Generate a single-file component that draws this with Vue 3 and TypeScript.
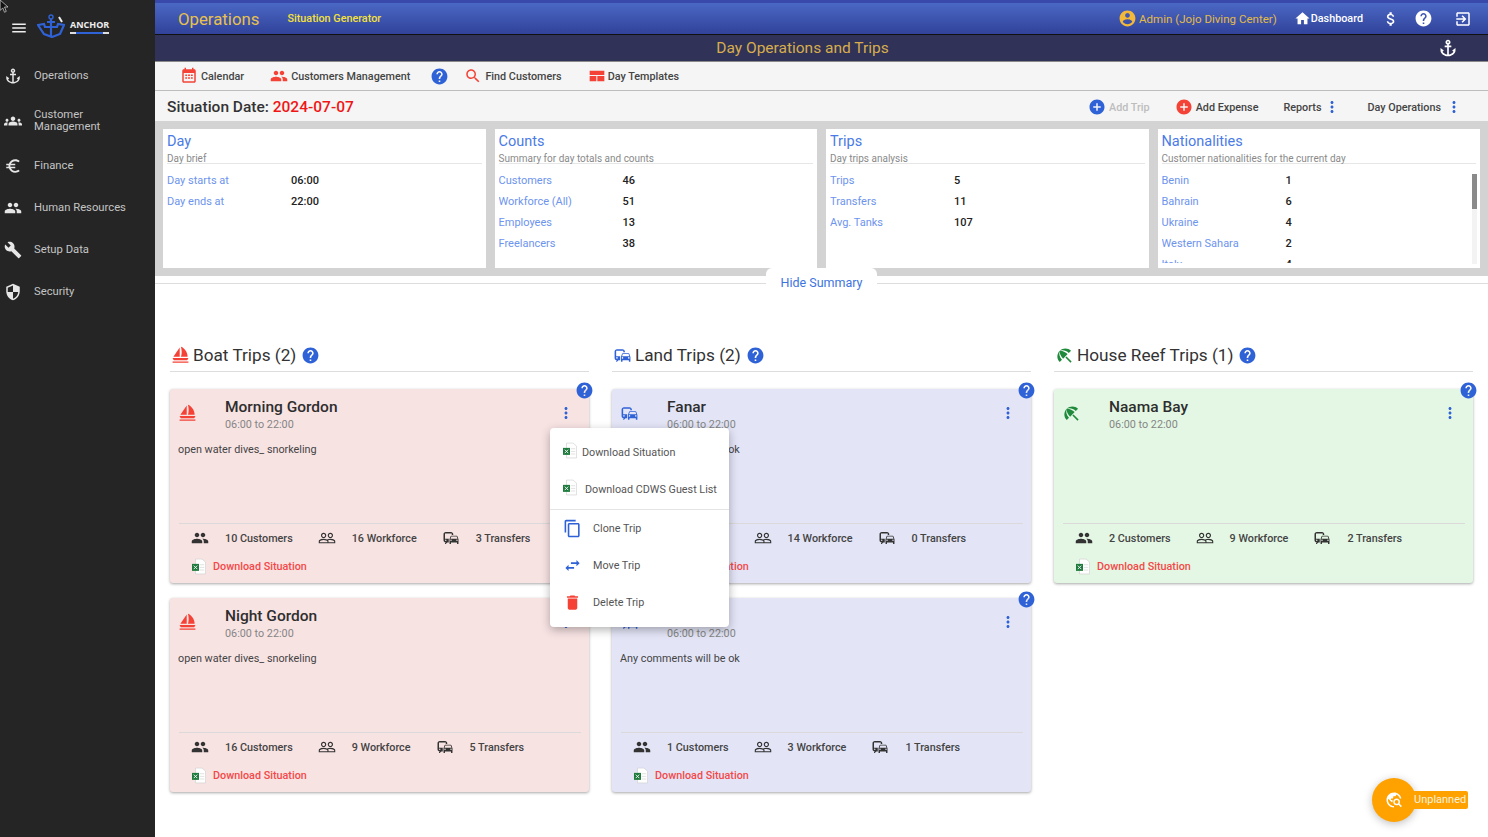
<script setup lang="ts">
// Day operations board: left menu, header bars, summary cards and trip columns
const ic = {
  anchor: 'M17,15l1.55,1.55c-0.96,1.69-3.33,3.04-5.55,3.37V11h3V9h-3V7.82C14.16,7.4,15,6.3,15,5c0-1.65-1.35-3-3-3S9,3.35,9,5c0,1.3,0.84,2.4,2,2.82V9H8v2h3v8.92c-2.22-0.33-4.59-1.68-5.55-3.37L7,15l-4-3v3c0,3.88,4.92,7,9,7s9-3.12,9-7v-3L17,15z M12,4c0.55,0,1,0.45,1,1s-0.45,1-1,1s-1-0.45-1-1S11.45,4,12,4z',
  groups: 'M12 12.75c1.63 0 3.07.39 4.24.9 1.08.48 1.76 1.56 1.76 2.73V18H6v-1.61c0-1.18.68-2.26 1.76-2.73 1.17-.52 2.61-.91 4.24-.91zM4 13c1.1 0 2-.9 2-2s-.9-2-2-2-2 .9-2 2 .9 2 2 2zm1.13 1.1c-.37-.06-.74-.1-1.13-.1-.99 0-1.93.21-2.78.58C.48 14.9 0 15.62 0 16.43V18h4.5v-1.61c0-.83.23-1.61.63-2.29zM20 13c1.1 0 2-.9 2-2s-.9-2-2-2-2 .9-2 2 .9 2 2 2zm4 3.43c0-.81-.48-1.53-1.22-1.85-.85-.37-1.79-.58-2.78-.58-.39 0-.76.04-1.13.1.4.68.63 1.46.63 2.29V18H24v-1.57zM12 6c1.66 0 3 1.34 3 3s-1.34 3-3 3-3-1.34-3-3 1.34-3 3-3z',
  euro: 'M15 18.5c-2.51 0-4.68-1.42-5.76-3.5H15v-2H8.58c-.05-.33-.08-.66-.08-1s.03-.67.08-1H15V9H9.24C10.32 6.92 12.5 5.5 15 5.5c1.61 0 3.09.59 4.23 1.57L21 5.3C19.41 3.87 17.3 3 15 3c-3.92 0-7.24 2.51-8.48 6H3v2h3.06c-.04.33-.06.66-.06 1 0 .34.02.67.06 1H3v2h3.52c1.24 3.49 4.56 6 8.48 6 2.31 0 4.41-.87 6-2.3l-1.78-1.77c-1.13.98-2.6 1.57-4.22 1.57z',
  people: 'M16 11c1.66 0 2.99-1.34 2.99-3S17.66 5 16 5c-1.66 0-3 1.34-3 3s1.34 3 3 3zm-8 0c1.66 0 2.99-1.34 2.99-3S9.66 5 8 5C6.34 5 5 6.34 5 8s1.34 3 3 3zm0 2c-2.33 0-7 1.17-7 3.5V19h14v-2.5c0-2.33-4.67-3.5-7-3.5zm8 0c-.29 0-.62.02-.97.05 1.16.84 1.97 1.97 1.97 3.45V19h6v-2.5c0-2.33-4.67-3.5-7-3.5z',
  peopleOutline: 'M16.5 13c-1.2 0-3.07.34-4.5 1-1.43-.67-3.3-1-4.5-1C5.33 13 1 14.08 1 16.25V19h22v-2.75c0-2.17-4.33-3.25-6.5-3.25zm-4 4.5h-10v-1.25c0-.54 2.56-1.75 5-1.75s5 1.21 5 1.75v1.25zm9 0H14v-1.25c0-.46-.2-.86-.52-1.22.88-.3 1.96-.53 3.02-.53 2.44 0 5 1.21 5 1.75v1.25zM7.5 12c1.93 0 3.5-1.57 3.5-3.5S9.43 5 7.5 5 4 6.57 4 8.5 5.57 12 7.5 12zm0-5.5c1.1 0 2 .9 2 2s-.9 2-2 2-2-.9-2-2 .9-2 2-2zm9 5.5c1.93 0 3.5-1.57 3.5-3.5S18.43 5 16.5 5 13 6.57 13 8.5s1.57 3.5 3.5 3.5zm0-5.5c1.1 0 2 .9 2 2s-.9 2-2 2-2-.9-2-2 .9-2 2-2z',
  commute: 'M12 4H5C3.34 4 2 5.34 2 7v8c0 1.66 1.34 3 3 3l-1 1v1h1l2-2.03L9 18v-5H4V5.98L13 6v2h2V7c0-1.66-1.34-3-3-3zM5 14c.55 0 1 .45 1 1s-.45 1-1 1-1-.45-1-1 .45-1 1-1zm15.57-4.34c-.14-.4-.52-.66-.97-.66h-7.19c-.46 0-.83.26-.98.66L10 13.77l.01 5.51c0 .38.31.72.69.72h.62c.38 0 .68-.38.68-.76V18h8v1.24c0 .38.31.76.69.76h.61c.38 0 .69-.34.69-.72l.01-1.37v-4.14l-1.43-4.11zm-8.16.34h7.19l1.03 3h-9.25l1.03-3zM12 16c-.55 0-1-.45-1-1s.45-1 1-1 1 .45 1 1-.45 1-1 1zm8 0c-.55 0-1-.45-1-1s.45-1 1-1 1 .45 1 1-.45 1-1 1z',
  sailing: 'M11 13.5V2L3 13.5h8zm10 0C21 7 15.5 1.5 12.5 1c0 0 1 3 1 6.5s-1 6-1 6H21zM22 15H2c.3 1.200.9 2.200 1.700 3h16.600c.8-.8 1.400-1.800 1.700-3zM2 19.500h20V21H2z',
  umbrella: 'M13.127 14.56l1.43-1.43 6.44 6.443L19.57 21zm4.293-5.73l2.86-2.86c-3.95-3.95-10.35-3.96-14.3-.02 3.93-1.3 8.31-.25 11.44 2.88zM5.95 5.98c-3.94 3.95-3.93 10.35.02 14.3l2.86-2.86C5.7 14.29 4.65 9.91 5.95 5.98zm.02-.02l-.01.01c-.38 3.01 1.17 6.88 4.3 10.02l5.73-5.73c-3.13-3.13-7.01-4.68-10.02-4.3z',
  help: 'M12 2C6.48 2 2 6.48 2 12s4.48 10 10 10 10-4.48 10-10S17.52 2 12 2zm1 17h-2v-2h2v2zm2.07-7.75l-.9.92C13.45 12.9 13 13.5 13 15h-2v-.5c0-1.1.45-2.1 1.17-2.83l1.24-1.26c.37-.36.59-.86.59-1.41 0-1.1-.9-2-2-2s-2 .9-2 2H8c0-2.21 1.79-4 4-4s4 1.79 4 4c0 .88-.36 1.68-.93 2.25z',
  search: 'M15.5 14h-.79l-.28-.27C15.41 12.59 16 11.11 16 9.5 16 5.91 13.09 3 9.5 3S3 5.91 3 9.5 5.91 16 9.5 16c1.61 0 3.09-.59 4.23-1.57l.27.28v.79l5 4.99L20.49 19l-4.99-5zm-6 0C7.01 14 5 11.99 5 9.5S7.01 5 9.5 5 14 7.01 14 9.5 11.99 14 9.5 14z',
  account: 'M12 2C6.48 2 2 6.48 2 12s4.48 10 10 10 10-4.48 10-10S17.52 2 12 2zm0 3c1.66 0 3 1.34 3 3s-1.34 3-3 3-3-1.34-3-3 1.34-3 3-3zm0 14.2c-2.5 0-4.71-1.28-6-3.22.03-1.99 4-3.08 6-3.08 1.99 0 5.97 1.09 6 3.08-1.29 1.94-3.5 3.22-6 3.22z',
  home: 'M10 20v-6h4v6h5v-8h3L12 3 2 12h3v8z',
  money: 'M11.8 10.9c-2.27-.59-3-1.2-3-2.15 0-1.09 1.01-1.85 2.7-1.85 1.78 0 2.44.85 2.5 2.1h2.21c-.07-1.72-1.12-3.3-3.21-3.81V3h-3v2.16c-1.94.42-3.5 1.68-3.5 3.61 0 2.31 1.91 3.46 4.7 4.13 2.5.6 3 1.48 3 2.41 0 .69-.49 1.79-2.7 1.79-2.06 0-2.87-.92-2.98-2.1h-2.2c.12 2.19 1.76 3.42 3.68 3.83V21h3v-2.15c1.95-.37 3.5-1.5 3.5-3.55 0-2.84-2.43-3.81-4.7-4.4z',
  exit: 'M10.09 15.59L11.5 17l5-5-5-5-1.41 1.41L12.67 11H3v2h9.67l-2.58 2.59zM19 3H5c-1.11 0-2 .9-2 2v4h2V5h14v14H5v-4H3v4c0 1.1.89 2 2 2h14c1.1 0 2-.9 2-2V5c0-1.1-.9-2-2-2z',
  more: 'M12 8c1.1 0 2-.9 2-2s-.9-2-2-2-2 .9-2 2 .9 2 2 2zm0 2c-1.1 0-2 .9-2 2s.9 2 2 2 2-.9 2-2-.9-2-2-2zm0 6c-1.1 0-2 .9-2 2s.9 2 2 2 2-.9 2-2-.9-2-2-2z',
  add: 'M12 2C6.48 2 2 6.48 2 12s4.48 10 10 10 10-4.48 10-10S17.52 2 12 2zm5 11h-4v4h-2v-4H7v-2h4V7h2v4h4v2z',
  copy: 'M16 1H4c-1.1 0-2 .9-2 2v14h2V3h12V1zm3 4H8c-1.1 0-2 .9-2 2v14c0 1.1.9 2 2 2h11c1.1 0 2-.9 2-2V7c0-1.1-.9-2-2-2zm0 16H8V7h11v14z',
  swap: 'M6.99 11L3 15l3.99 4v-3H14v-2H6.99v-3zM21 9l-3.99-4v3H10v2h7.01v3L21 9z',
  del: 'M6 19c0 1.1.9 2 2 2h8c1.1 0 2-.9 2-2V7H6v12zM19 4h-3.5l-1-1h-5l-1 1H5v2h14V4z',
  menu: 'M3 18h18v-2H3v2zm0-5h18v-2H3v2zm0-7v2h18V6H3z',
  build: 'M22.7 19l-9.1-9.1c.9-2.3.4-5-1.5-6.9-2-2-5-2.4-7.4-1.3L9 6 6 9 1.6 4.7C.4 7.1.9 10.1 2.9 12.1c1.9 1.9 4.6 2.4 6.9 1.5l9.1 9.1c.4.4 1 .4 1.4 0l2.3-2.3c.5-.4.5-1.1.1-1.4z',
  security: 'M12 1L3 5v6c0 5.55 3.84 10.74 9 12 5.16-1.26 9-6.45 9-12V5l-9-4zm0 10.99h7c-.53 4.12-3.28 7.79-7 8.94V12H5V6.3l7-3.11v8.8z',
  explore: 'M19.3 16.9c.4-.7.7-1.5.7-2.4 0-2.5-2-4.5-4.5-4.5S11 12 11 14.5s2 4.5 4.5 4.5c.9 0 1.7-.3 2.4-.7l3.2 3.2 1.4-1.4-3.2-3.2zm-3.8.1c-1.4 0-2.5-1.1-2.5-2.5s1.1-2.5 2.5-2.5 2.5 1.1 2.5 2.5-1.1 2.5-2.5 2.5zM12 20v2C6.48 22 2 17.52 2 12S6.48 2 12 2c4.84 0 8.87 3.44 9.8 8h-2.07c-.64-2.46-2.4-4.47-4.73-5.41V5c0 1.1-.9 2-2 2h-2v2c0 .55-.45 1-1 1H8v2h2v3H9l-4.79-4.79C4.08 10.79 4 11.38 4 12c0 4.41 3.59 8 8 8z',
}

const sideItems = [
  { icon: ic.anchor, label: 'Operations' },
  { icon: ic.groups, label: 'Customer Management', tall: true },
  { icon: ic.euro, label: 'Finance' },
  { icon: ic.people, label: 'Human Resources' },
  { icon: ic.build, label: 'Setup Data' },
  { icon: ic.security, label: 'Security' },
]

const summary = [
  { title: 'Day', sub: 'Day brief', rows: [['Day starts at', '06:00'], ['Day ends at', '22:00']] },
  { title: 'Counts', sub: 'Summary for day totals and counts', rows: [['Customers', '46'], ['Workforce (All)', '51'], ['Employees', '13'], ['Freelancers', '38']] },
  { title: 'Trips', sub: 'Day trips analysis', rows: [['Trips', '5'], ['Transfers', '11'], ['Avg. Tanks', '107']] },
  { title: 'Nationalities', sub: 'Customer nationalities for the current day', scroll: true, rows: [['Benin', '1'], ['Bahrain', '6'], ['Ukraine', '4'], ['Western Sahara', '2'], ['Italy', '4']] },
]

interface Trip {
  name: string
  comment: string
  customers: number
  workforce: number
  transfers: number
  menu?: boolean
}

const columns: { title: string; icon: string; tone: string; trips: Trip[] }[] = [
  {
    title: 'Boat Trips (2)', icon: ic.sailing, tone: 'boat',
    trips: [
      { name: 'Morning Gordon', comment: 'open water dives_ snorkeling', customers: 10, workforce: 16, transfers: 3, menu: true },
      { name: 'Night Gordon', comment: 'open water dives_ snorkeling', customers: 16, workforce: 9, transfers: 5 },
    ],
  },
  {
    title: 'Land Trips (2)', icon: ic.commute, tone: 'land',
    trips: [
      { name: 'Fanar', comment: 'Any comments will be ok', customers: 2, workforce: 14, transfers: 0 },
      // this trip's name sits behind the open menu
      { name: '\u00a0', comment: 'Any comments will be ok', customers: 1, workforce: 3, transfers: 1 },
    ],
  },
  {
    title: 'House Reef Trips (1)', icon: ic.umbrella, tone: 'reef',
    trips: [{ name: 'Naama Bay', comment: '', customers: 2, workforce: 9, transfers: 2 }],
  },
]
</script>

<template>
  <div class="app">
    <svg class="cursor" viewBox="0 0 10 16"><path d="M0 0v12l3-3 2 5 2-1-2-5h4z" fill="#111" stroke="#ddd" stroke-width=".8" /></svg>

    <aside class="side">
      <div class="side-head">
        <svg class="burger" viewBox="0 0 24 24"><path :d="ic.menu" /></svg>
        <svg class="logo" viewBox="0 0 28 24">
          <path d="M1 11l6-1 1 3h12l1-3 6 1-4 9-8 3-8-3z" fill="none" stroke="#2f62d6" stroke-width="2.2" />
          <path d="M14 5v17M10 8h8" stroke="#2f62d6" stroke-width="2.2" fill="none" />
          <circle cx="14" cy="3" r="2" fill="none" stroke="#2f62d6" stroke-width="1.4" />
          <path d="M22 3l3 5" stroke="#eee" stroke-width="2" />
        </svg>
        <div class="logo-text">
          <span>ANCHOR</span>
          <i></i>
        </div>
      </div>
      <div v-for="item in sideItems" :key="item.label" class="side-item" :class="{ tall: item.tall }">
        <svg viewBox="0 0 24 24"><path :d="item.icon" /></svg>
        <span>{{ item.label }}</span>
      </div>
    </aside>

    <main class="main">
      <header class="topbar">
        <span class="top-title">Operations</span>
        <span class="top-link">Situation Generator</span>
        <div class="top-right">
          <svg class="i19 gold" viewBox="0 0 24 24"><path :d="ic.account" /></svg>
          <span class="admin">Admin (Jojo Diving Center)</span>
          <svg class="i17 home" viewBox="0 0 24 24"><path :d="ic.home" /></svg>
          <span class="dash">Dashboard</span>
          <svg class="i18 money" viewBox="0 0 24 24"><path :d="ic.money" /></svg>
          <svg class="i19 qhelp" viewBox="0 0 24 24"><path :d="ic.help" /></svg>
          <svg class="i18 exit" viewBox="0 0 24 24"><path :d="ic.exit" /></svg>
        </div>
      </header>

      <div class="titlebar">
        <span>Day Operations and Trips</span>
        <svg viewBox="0 0 24 24"><path :d="ic.anchor" /></svg>
      </div>

      <nav class="subnav">
        <svg class="i18 red" viewBox="0 0 24 24">
          <path d="M19 3h-1V1h-2v2H8V1H6v2H5c-1.1 0-2 .9-2 2v14c0 1.1.9 2 2 2h14c1.1 0 2-.9 2-2V5c0-1.1-.9-2-2-2zm0 16H5V8h14v11z" />
          <path d="M7 10h2.500v2H7zM10.750 10h2.500v2h-2.500zM14.500 10H17v2h-2.500zM7 13.500h2.500v2H7zM10.750 13.500h2.500v2h-2.500zM14.500 13.500H17v2h-2.500z" />
        </svg>
        <span class="nav-text">Calendar</span>
        <svg class="i18 red nav-gap" viewBox="0 0 24 24"><path :d="ic.people" /></svg>
        <span class="nav-text">Customers Management</span>
        <svg class="i19 blue nav-help" viewBox="0 0 24 24"><path :d="ic.help" /></svg>
        <svg class="i18 red nav-search" viewBox="0 0 24 24"><path :d="ic.search" /></svg>
        <span class="nav-text">Find Customers</span>
        <svg class="i16 red nav-tpl" viewBox="0 0 24 24"><path d="M1 4h22v16H1zM1 10.500v1.500h22v-1.500zM11 12h1.500v8H11z" fill-rule="evenodd" /></svg>
        <span class="nav-text">Day Templates</span>
      </nav>

      <div class="datebar">
        <h1>Situation Date: <b>2024-07-07</b></h1>
        <div class="actions">
          <svg class="i18 blue" viewBox="0 0 24 24"><path :d="ic.add" /></svg>
          <span class="act off">Add Trip</span>
          <svg class="i18 red2 act-add" viewBox="0 0 24 24"><path :d="ic.add" /></svg>
          <span class="act">Add Expense</span>
          <span class="act reports">Reports</span>
          <svg class="i18 blue dots" viewBox="0 0 24 24"><path :d="ic.more" /></svg>
          <span class="act dayops">Day Operations</span>
          <svg class="i18 blue dots last" viewBox="0 0 24 24"><path :d="ic.more" /></svg>
        </div>
      </div>

      <section class="summary">
        <div v-for="card in summary" :key="card.title" class="sum-card">
          <div class="sum-title">{{ card.title }}</div>
          <div class="sum-sub">{{ card.sub }}</div>
          <div class="sum-rows">
            <div v-for="row in card.rows" :key="row[0]" class="sum-row">
              <span>{{ row[0] }}</span>
              <b>{{ row[1] }}</b>
            </div>
          </div>
          <div v-if="card.scroll" class="track"><div class="thumb"></div></div>
        </div>
      </section>

      <div class="hide-row">
        <button class="hide-btn">Hide Summary</button>
      </div>

      <section class="board">
        <div v-for="col in columns" :key="col.title" class="col" :class="col.tone">
          <div class="col-head">
            <svg class="i19 tone" viewBox="0 0 24 24"><path :d="col.icon" /></svg>
            <span>{{ col.title }}</span>
            <svg class="i19 blue" viewBox="0 0 24 24"><path :d="ic.help" /></svg>
          </div>

          <article v-for="(trip, i) in col.trips" :key="i" class="trip">
            <svg class="i19 blue trip-help" viewBox="0 0 24 24"><path :d="ic.help" /></svg>
            <div class="trip-head">
              <svg class="i19 tone trip-icon" viewBox="0 0 24 24"><path :d="col.icon" /></svg>
              <div class="trip-name">
                <strong>{{ trip.name }}</strong>
                <small>06:00 to 22:00</small>
              </div>
              <svg class="i18 blue trip-more" viewBox="0 0 24 24"><path :d="ic.more" /></svg>
            </div>
            <p class="comment">{{ trip.comment }}</p>
            <div class="stats">
              <svg class="i18" viewBox="0 0 24 24"><path :d="ic.people" /></svg>
              <span>{{ trip.customers }} Customers</span>
              <svg class="i18" viewBox="0 0 24 24"><path :d="ic.peopleOutline" /></svg>
              <span>{{ trip.workforce }} Workforce</span>
              <svg class="i18" viewBox="0 0 24 24"><path :d="ic.commute" /></svg>
              <span>{{ trip.transfers }} Transfers</span>
            </div>
            <div class="download">
              <svg class="xls" viewBox="0 0 16 18">
                <path d="M4 .5h7.500L15.500 4v13.500H4z" fill="#fff" stroke="#ccc" stroke-width=".7" />
                <path d="M9 7h5M9 10h5M9 13h5" stroke="#ddd" stroke-width="1" />
                <rect x="0" y="6" width="8" height="8" fill="#1f7a3d" />
                <path d="M2 8l4 4M6 8l-4 4" stroke="#fff" stroke-width="1" />
              </svg>
              <span>Download Situation</span>
            </div>

            <div v-if="trip.menu" class="menu">
              <div class="mi">
                <svg class="xls" viewBox="0 0 16 18">
                  <path d="M4 .5h7.500L15.500 4v13.500H4z" fill="#fff" stroke="#ccc" stroke-width=".7" />
                  <path d="M9 7h5M9 10h5M9 13h5" stroke="#ddd" stroke-width="1" />
                  <rect x="0" y="6" width="8" height="8" fill="#1f7a3d" />
                  <path d="M2 8l4 4M6 8l-4 4" stroke="#fff" stroke-width="1" />
                </svg>
                <span class="m1">Download Situation</span>
              </div>
              <div class="mi">
                <svg class="xls" viewBox="0 0 16 18">
                  <path d="M4 .5h7.500L15.500 4v13.500H4z" fill="#fff" stroke="#ccc" stroke-width=".7" />
                  <path d="M9 7h5M9 10h5M9 13h5" stroke="#ddd" stroke-width="1" />
                  <rect x="0" y="6" width="8" height="8" fill="#1f7a3d" />
                  <path d="M2 8l4 4M6 8l-4 4" stroke="#fff" stroke-width="1" />
                </svg>
                <span class="m2">Download CDWS Guest List</span>
              </div>
              <div class="mdiv"></div>
              <div class="mi">
                <svg class="i19 blue" viewBox="0 0 24 24"><path :d="ic.copy" /></svg>
                <span class="m3">Clone Trip</span>
              </div>
              <div class="mi">
                <svg class="i19 blue" viewBox="0 0 24 24"><path :d="ic.swap" /></svg>
                <span class="m3">Move Trip</span>
              </div>
              <div class="mi">
                <svg class="i19 red2" viewBox="0 0 24 24"><path :d="ic.del" /></svg>
                <span class="m3">Delete Trip</span>
              </div>
            </div>
          </article>
        </div>
      </section>

      <div class="fab">
        <div class="fab-btn">
          <svg viewBox="0 0 24 24"><path :d="ic.explore" /></svg>
        </div>
        <div class="fab-label">Unplanned</div>
      </div>
    </main>
  </div>
</template>

<style scoped>
.app {
  display: flex;
  height: 837px;
  overflow: hidden;
  font-family: Roboto, "Liberation Sans", sans-serif;
  font-size: 10.800px;
  color: #333;
  background: #fff;
  position: relative;
}

.cursor {
  position: absolute;
  left: 0;
  top: 0;
  width: 9px;
  height: 14px;
  z-index: 50;
}

svg {
  fill: currentColor;
  flex: none;
  display: block;
}

.i16 { width: 16px; height: 16px; }
.i17 { width: 17px; height: 17px; }
.i18 { width: 18px; height: 18px; }
.i19 { width: 19px; height: 19px; }
.red { color: #f44336; }
.red2 { color: #f44336; }
.blue { color: #2f62d6; }
.gold { color: #f5b93a; }

/* --- SIDEBAR --- */
.side {
  width: 155px;
  flex: none;
  background: #252525;
  color: #c4c4c4;
  font-size: 11.250px;
}

.side-head {
  height: 55px;
  display: flex;
  align-items: center;
  padding: 1px 0 0 10px;
  box-sizing: border-box;
}

.burger {
  width: 18px;
  height: 18px;
  color: #eee;
}

.logo {
  width: 28px;
  height: 24px;
  margin: -4px 0 0 9px;
}

.logo-text {
  margin: -2px 0 0 5px;
  color: #eee;
  font-size: 9px;
  font-weight: 700;
  line-height: 10px;
  font-family: "Open Sans", Roboto, sans-serif;
}

.logo-text span { display: block; }

.logo-text i {
  display: block;
  height: 2px;
  margin-top: 2px;
  background: linear-gradient(90deg, #ddd 15%, #2f62d6 15%, #2f62d6 85%, #ddd 85%);
}

.side-item {
  height: 42px;
  display: flex;
  align-items: center;
  gap: 12px;
  padding-left: 4px;
  line-height: 12px;
}

.side-item.tall { height: 48px; }

.side-item svg {
  width: 18px;
  height: 18px;
  color: #e6e6e6;
}

.side-item span { width: 100px; }

/* --- HEADER BARS --- */
.main {
  flex: 1;
  min-width: 0;
  display: flex;
  flex-direction: column;
  position: relative;
}

.topbar {
  height: 35px;
  box-sizing: border-box;
  border-top: 3px solid #3949ab;
  border-bottom: 1px solid #111;
  background: linear-gradient(180deg, #4a68c4, #31429a);
  display: flex;
  align-items: center;
  padding-left: 23px;
}

.top-title {
  font-size: 16.800px;
  color: #e8c14f;
}

.top-link {
  margin-left: 28px;
  color: #f4e13b;
  font-weight: 500;
}

.top-right {
  margin-left: auto;
  display: flex;
  align-items: center;
  padding-right: 16px;
  color: #fff;
}

.admin {
  margin-left: 2px;
  color: #e3bb48;
  font-size: 11.550px;
}

.home { margin-left: 17px; }

.dash {
  font-weight: 500;
}

.money { margin-left: 19px; }
.qhelp { margin-left: 14px; }
.exit { margin-left: 21px; }

.titlebar {
  height: 27px;
  box-sizing: border-box;
  background: #303357;
  border-bottom: 1px solid #8a8a8a;
  color: #d7ad4d;
  font-size: 15.500px;
  display: flex;
  align-items: center;
  padding-right: 30px;
}

.titlebar span {
  flex: 1;
  text-align: center;
  padding-left: 12px;
}

.titlebar svg {
  width: 20px;
  height: 20px;
  color: #fff;
}

.subnav {
  height: 29px;
  box-sizing: border-box;
  background: #f5f5f5;
  border-bottom: 1px solid #bdbdbd;
  display: flex;
  align-items: center;
  padding-left: 25px;
}

.nav-text {
  margin-left: 3px;
  font-weight: 500;
  color: #444;
}

.nav-gap { margin-left: 26px; }
.nav-help { margin-left: 20px; }
.nav-search { margin-left: 15px; }
.nav-tpl { margin-left: 27px; }

.datebar {
  height: 30px;
  box-sizing: border-box;
  padding: 2px 0 0 12px;
  background: #f5f5f5;
  display: flex;
  align-items: center;
}

.datebar h1 {
  margin: 0;
  font-size: 15.500px;
  font-weight: 500;
  color: #333;
}

.datebar b {
  color: #f01616;
  font-weight: 500;
}

.actions {
  margin-left: auto;
  display: flex;
  align-items: center;
  padding-right: 25px;
}

.act {
  margin-left: 3px;
  font-weight: 500;
  color: #444;
}

.act.off { color: #bdbdbd; }
.act-add { margin-left: 25px; }
.reports { margin-left: 25px; }
.dayops { margin-left: 26px; }
.dots { margin-left: 2px; }
.dots.last { margin-left: 4px; }

/* --- SUMMARY --- */
.summary {
  height: 155px;
  box-sizing: border-box;
  padding: 8px;
  background: #d3d3d3;
  display: grid;
  grid-template-columns: repeat(4, 1fr);
  gap: 9px;
}

.sum-card {
  background: #fff;
  padding: 3px 4px 0;
  position: relative;
  min-width: 0;
}

.sum-title {
  font-size: 14.500px;
  line-height: 20px;
  margin-bottom: -1px;
  color: #4a7be6;
}

.sum-sub {
  font-size: 10px;
  height: 12px;
  line-height: 15px;
  color: #8a8a8a;
  border-bottom: 1px solid #e6e6e6;
}

.sum-rows {
  margin-top: 6px;
  height: 93px;
  overflow: hidden;
  font-size: 11px;
}

.sum-row {
  height: 21px;
  line-height: 21px;
  display: flex;
}

.sum-row span {
  width: 124px;
  flex: none;
  color: #6d94ee;
}

.sum-row b {
  font-weight: 500;
  color: #222;
}

.track {
  position: absolute;
  right: 3px;
  top: 45px;
  width: 5px;
  height: 90px;
  background: #f3f3f3;
}

.thumb {
  height: 35px;
  background: #8a8a8a;
}

.hide-row {
  height: 14px;
  position: relative;
}

.hide-row::before {
  content: '';
  position: absolute;
  left: 0;
  right: 0;
  top: 7px;
  border-top: 1px solid #ddd;
}

.hide-btn {
  position: absolute;
  left: 611px;
  top: -8px;
  width: 111px;
  height: 28px;
  border: 0;
  padding: 0;
  background: #fff;
  border-radius: 6px 6px 0 0;
  color: #3d74e0;
  font: 12.500px Roboto, sans-serif;
}

/* --- TRIP COLUMNS --- */
.board {
  padding: 51px 15px 0;
  display: grid;
  grid-template-columns: repeat(3, 1fr);
  gap: 23px;
  align-items: start;
}

.boat .tone { color: #f44336; }
.land .tone { color: #2f62d6; }
.reef .tone { color: #1f8a3c; }
.boat .trip { background: #f8e3e3; }
.land .trip { background: #e3e5f7; }
.reef .trip { background: #e4f7e4; }

.col-head {
  height: 26px;
  display: flex;
  align-items: center;
  gap: 3px;
  border-bottom: 1px solid #ddd;
  font-size: 17.200px;
  color: #333;
  padding: 1px 0 3px 1px;
}

.col-head span { margin-right: 2px; }

.trip {
  margin-top: 17px;
  height: 194px;
  box-sizing: border-box;
  padding: 9px 8px 3px;
  border-radius: 3px;
  box-shadow: 0 1px 3px rgba(0, 0, 0, 0.35);
  display: flex;
  flex-direction: column;
  position: relative;
}

.trip + .trip { margin-top: 15px; }

.trip-help {
  position: absolute;
  top: -8px;
  right: -5px;
}

.trip-head {
  display: flex;
}

.trip-icon { margin-top: 6px; }

.trip-name {
  margin-left: 28px;
  display: flex;
  flex-direction: column;
}

.trip-name strong {
  font-size: 15.500px;
  line-height: 18px;
  font-weight: 500;
  color: #2e2e2e;
}

.trip-name small {
  font-size: 10.800px;
  line-height: 18px;
  color: #858585;
}

.trip-more {
  margin: 6px 6px 0 auto;
}

.comment {
  margin: 7px 0 0;
  line-height: 18px;
  color: #444;
}

.stats {
  margin-top: auto;
  height: 28px;
  display: flex;
  align-items: center;
  padding-left: 12px;
  border-top: 1px solid #dbd9d9;
  font-weight: 500;
  color: #444;
  margin-left: 1px;
}

.stats svg { color: #333; }
.stats span { margin: 0 25px 0 16px; }

.download {
  height: 28px;
  display: flex;
  align-items: center;
  padding-left: 14px;
  color: #f44848;
  font-weight: 500;
}

.xls {
  width: 14px;
  height: 17px;
}

.download span { margin-left: 7px; }

/* --- POPUP MENU --- */
.menu {
  position: absolute;
  left: 380px;
  top: 39px;
  width: 179px;
  padding: 6px 0;
  background: #fff;
  border-radius: 4px;
  box-shadow: 0 3px 10px rgba(0, 0, 0, 0.3);
  z-index: 10;
}

.mi {
  height: 37.300px;
  display: flex;
  align-items: center;
  padding-left: 13px;
  color: #555;
  white-space: nowrap;
}

.mi svg.xls { margin-top: -5px; }
.m1 { margin-left: 5px; }
.m2 { margin-left: 8px; }
.m3 { margin-left: 11px; }

.mdiv { border-top: 1px solid #e4e4e4; }

/* --- FAB --- */
.fab {
  position: absolute;
  left: 1217px;
  top: 778px;
  display: flex;
  align-items: center;
  height: 44px;
}

.fab-btn {
  width: 44px;
  height: 44px;
  border-radius: 50%;
  background: #ffa200;
  box-shadow: 0 2px 8px rgba(0, 0, 0, 0.25);
  color: #fff;
  display: flex;
  align-items: center;
  justify-content: center;
}

.fab-btn svg {
  width: 18px;
  height: 18px;
}

.fab-label {
  margin-left: -4px;
  height: 18px;
  line-height: 18px;
  padding: 0 2px;
  border-radius: 2px;
  background: #ffa200;
  color: #f7f1df;
  font-size: 11px;
}
</style>

<style>
html, body { margin: 0; background: #fff; }
</style>
